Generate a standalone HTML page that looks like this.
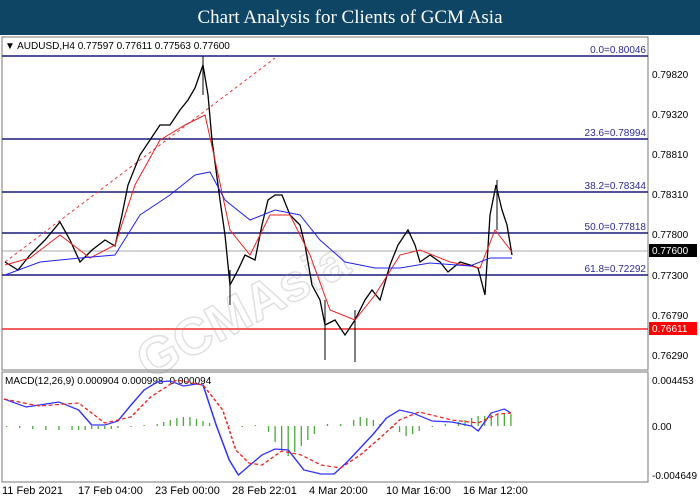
<!DOCTYPE html>
<html><head><style>
body{margin:0;width:700px;height:500px;background:#fff;font-family:"Liberation Sans",sans-serif;overflow:hidden;position:relative}
.hd{position:absolute;left:0;top:0;width:700px;height:35px;background:#0e4565;color:#fff;font-family:"Liberation Serif",serif;font-size:19px;text-align:center;line-height:36px}
</style></head><body>
<div class="hd">Chart Analysis for Clients of GCM Asia</div>
<svg width="700" height="500" style="position:absolute;left:0;top:0" font-family="Liberation Sans, sans-serif" font-size="10">
<rect x="2" y="37" width="646" height="333" fill="none" stroke="#777"/>
<rect x="2" y="372" width="646" height="110" fill="none" stroke="#777"/>
<text x="5" y="49" font-size="10" fill="#000">▼ AUDUSD,H4  0.77597 0.77611 0.77563 0.77600</text>
<g stroke="#1a1a7a" stroke-width="1.5">
<line x1="2" y1="56" x2="648" y2="56"/><line x1="2" y1="139" x2="648" y2="139"/><line x1="2" y1="192" x2="648" y2="192"/><line x1="2" y1="233" x2="648" y2="233"/><line x1="2" y1="275" x2="648" y2="275"/></g>
<line x1="2" y1="251" x2="648" y2="251" stroke="#aaa"/>
<line x1="2" y1="329" x2="648" y2="329" stroke="#e00" stroke-width="1.2"/>
<g fill="#2b2b9a" font-size="10" text-anchor="end">
<text x="646" y="53">0.0=0.80046</text><text x="646" y="136">23.6=0.78994</text><text x="646" y="189">38.2=0.78344</text><text x="646" y="230">50.0=0.77818</text><text x="646" y="272">61.8=0.72292</text></g>
<line x1="5" y1="262" x2="275" y2="58" stroke="#e33" stroke-dasharray="3,3"/>
<g fill="#000" font-size="10">
<text x="652" y="78">0.79820</text><text x="652" y="118">0.79320</text><text x="652" y="158">0.78810</text><text x="652" y="198">0.78310</text><text x="652" y="238">0.77800</text><text x="652" y="279">0.77300</text><text x="652" y="319">0.76790</text><text x="652" y="359">0.76290</text>
<text x="652" y="384">0.004453</text><text x="652" y="430">0.00</text><text x="652" y="479">-0.004649</text></g>
<rect x="649" y="244" width="48" height="13" fill="#000"/><text x="652" y="254" fill="#fff">0.77600</text>
<rect x="649" y="322" width="48" height="13" fill="#f00"/><text x="652" y="332" fill="#fff">0.76611</text>
<g opacity="0.25" fill="none" stroke="#888" stroke-width="1.5" font-size="52" font-weight="bold" transform="rotate(-28 340 250)"><text x="110" y="275">GCMAsia</text></g>
<polyline fill="none" stroke="#000" stroke-width="1.3" points="5,262 18,270 30,255 45,240 60,222 70,240 80,262 92,250 105,240 115,246 122,215 128,185 140,155 150,140 160,125 170,125 180,110 188,100 195,88 203,65 208,95 212,140 220,200 225,235 230,285 238,270 245,255 255,260 262,225 268,200 275,195 282,195 290,215 300,225 305,245 312,285 320,300 325,325 335,320 345,335 355,320 365,300 372,290 380,300 390,265 398,245 408,230 415,245 420,262 430,255 440,262 448,272 460,262 470,265 478,268 485,295 490,215 496,185 502,210 507,225 512,255"/>
<g stroke="#000"><line x1="203" y1="56" x2="203" y2="95"/><line x1="325" y1="300" x2="325" y2="360"/><line x1="355" y1="310" x2="355" y2="362"/><line x1="497" y1="180" x2="497" y2="230"/><line x1="230" y1="270" x2="230" y2="305"/></g>
<polyline fill="none" stroke="#e22" stroke-width="1" points="5,265 30,258 60,235 90,258 115,245 135,185 160,140 185,125 205,115 215,160 230,230 250,255 270,215 290,215 310,255 330,310 355,320 375,295 400,255 420,250 450,262 480,268 495,230 512,252"/>
<polyline fill="none" stroke="#22e" stroke-width="1" points="5,275 40,262 80,258 115,255 140,215 170,195 195,175 210,172 225,200 250,220 275,210 300,215 320,240 345,262 375,268 400,268 430,263 470,266 490,258 512,258"/>
<text x="5" y="384" font-size="10">MACD(12,26,9) 0.000904 0.000998 -0.000094</text>
<g transform="matrix(1.31,0,0,1,0,0)">
<g stroke="#4caa3c" stroke-width="1">
<path d="M5 426v1M15 426v2M25 426v3M35 426v4M45 426v4M55 426v4M60 426v4M65 426v4M70 426v3M75 426v3M80 426v3M85 426v3M90 426v2M100 426v1M110 426v-1M120 426v-2M125 426v-4M130 426v-6M135 426v-8M140 426v-9M145 426v-9M150 426v-7M155 426v-5M160 426v-3M165 426v-2M175 426v-1M185 426v1M195 426v-1M205 426v6M210 426v16M215 426v24M220 426v30M225 426v26M230 426v20M235 426v14M240 426v8M250 426v-2M260 426v-2M270 426v-6M275 426v-9M280 426v-8M285 426v-6M290 426v-2M300 426v2M305 426v6M310 426v10M315 426v8M320 426v5M330 426v1M340 426v-2M350 426v-4M355 426v-6M360 426v-8M365 426v-10M370 426v-10M375 426v-11M380 426v-11M385 426v-12M390 426v-12"/></g>
<polyline fill="none" stroke="#33f" stroke-width="1.2" points="3,399 20,407 35,404 45,402 60,410 70,425 80,425 90,421 100,405 110,390 120,382 130,381 140,386 150,384 155,385 165,425 175,460 182,475 190,466 200,455 210,449 220,450 232,470 245,474 255,474 265,462 275,448 285,434 295,418 305,410 315,413 330,421 345,422 360,426 365,431 375,413 385,409 390,413"/>
<polyline fill="none" stroke="#e22" stroke-width="1.2" stroke-dasharray="3,2" points="3,399 30,406 60,403 80,423 100,417 115,397 135,380 155,385 170,410 180,450 190,463 200,465 215,451 230,455 245,465 260,468 275,455 290,438 305,420 320,412 345,420 365,423 380,414 390,413"/>
</g>
<g font-size="11" fill="#000">
<text x="2" y="494">11 Feb 2021</text><text x="78" y="494">17 Feb 04:00</text><text x="155" y="494">23 Feb 00:00</text><text x="232" y="494">28 Feb 22:01</text><text x="309" y="494">4 Mar 20:00</text><text x="386" y="494">10 Mar 16:00</text><text x="463" y="494">16 Mar 12:00</text></g>
</svg>
</body></html>
